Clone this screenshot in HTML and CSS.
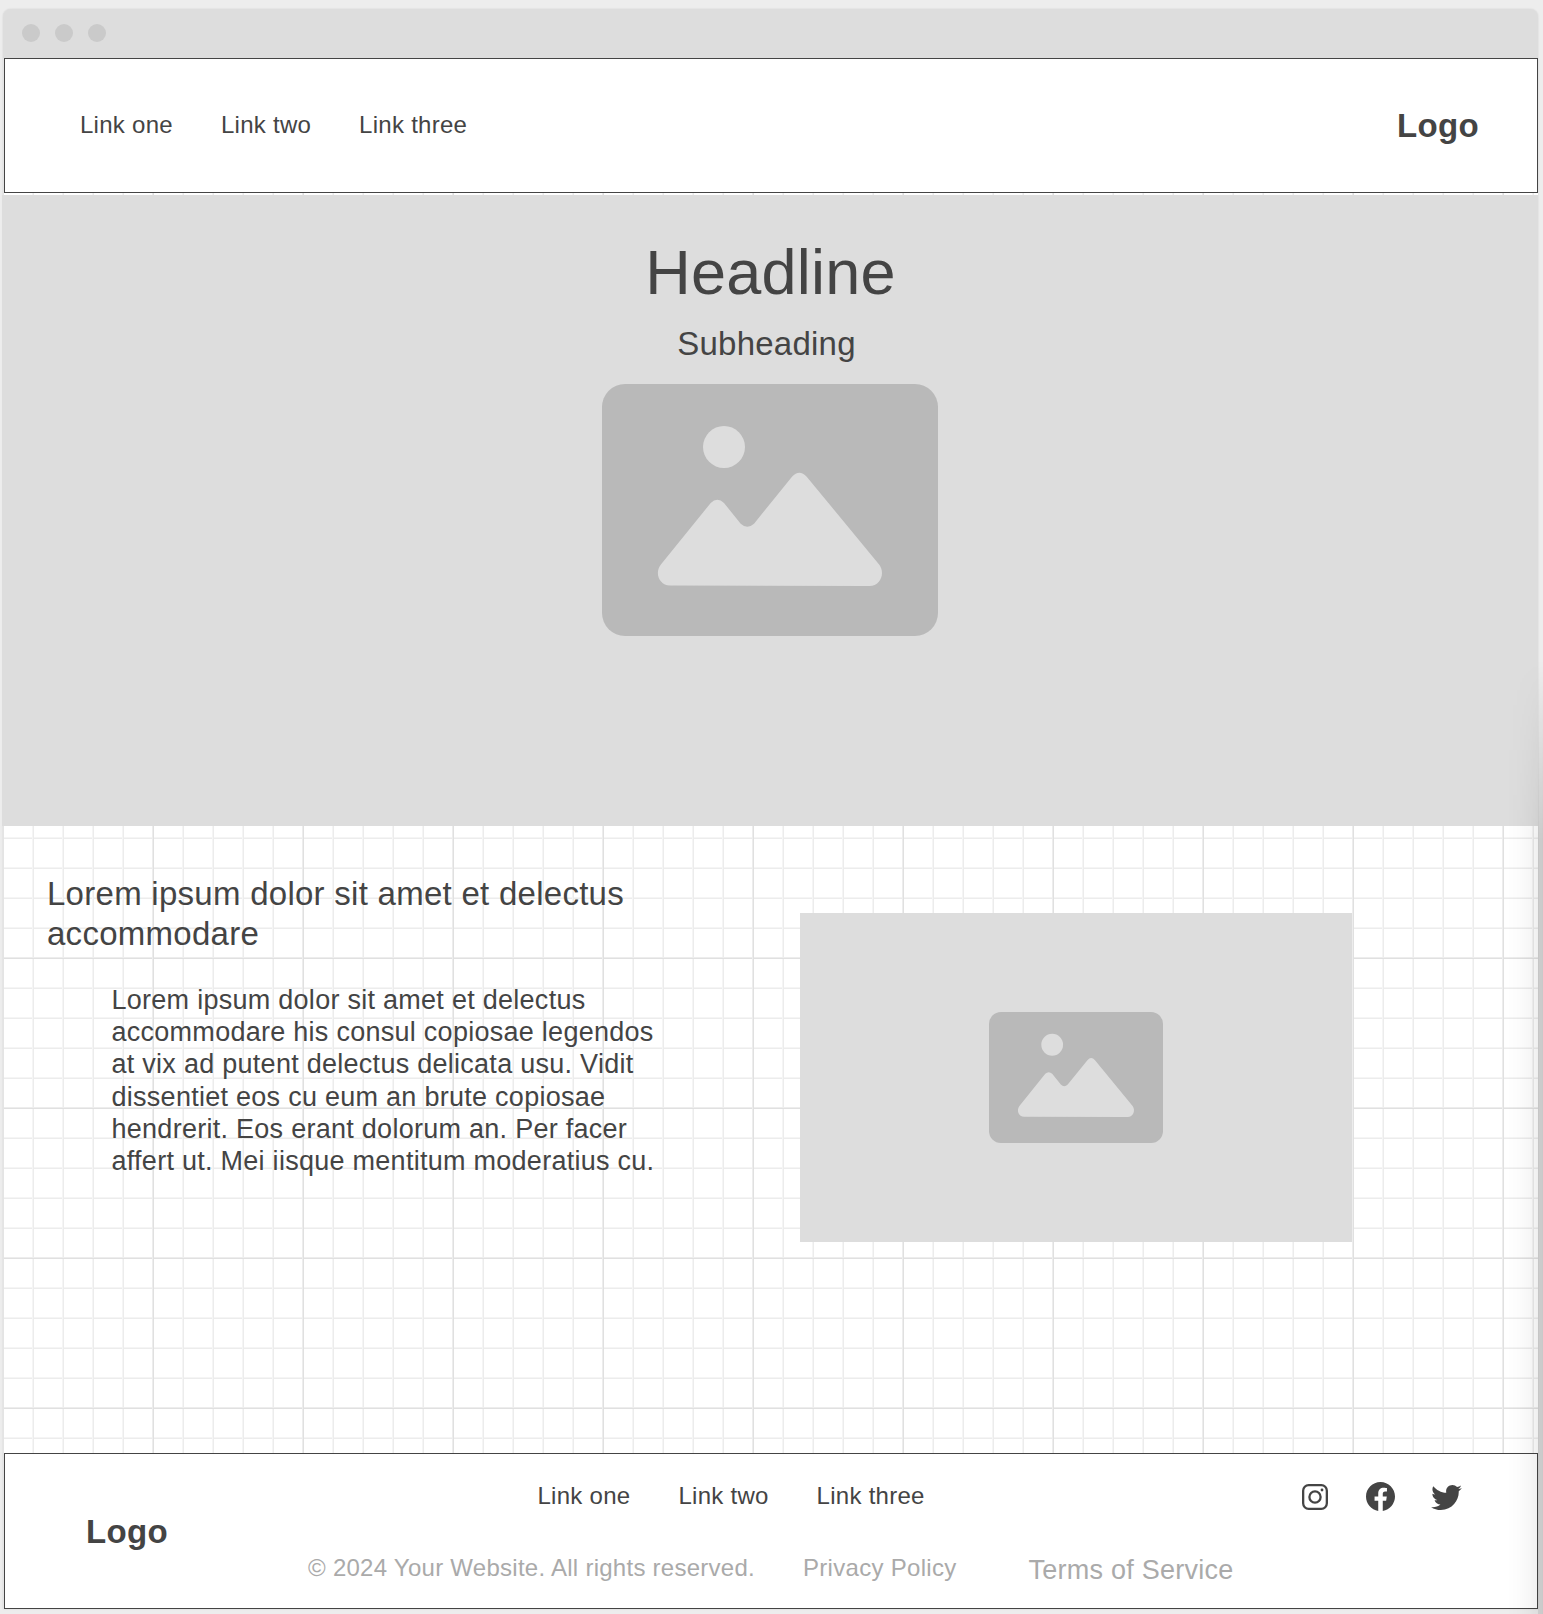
FILE: index.html
```html
<!DOCTYPE html>
<html lang="en">
<head>
<meta charset="utf-8">
<title>Wireframe</title>
<link rel="stylesheet" href="styles.css">
</head>
<body>
<svg class="defs" width="0" height="0" aria-hidden="true">
  <symbol id="picture" viewBox="0 0 336 252" preserveAspectRatio="none">
    <rect width="336" height="252" rx="23" fill="#b9b9b9"/>
    <circle cx="122" cy="63" r="21" fill="#ddd"/>
    <path fill="#ddd" d="M58.7 180.7L108.7 119Q115.3 112.400 122 119L138.700 139.700Q145.300 145.700 152 139.700L190 92.700Q197.300 84.700 204.700 92.700L277.300 180.700C283.500 189 278.500 202 267.500 202L68 201.500C57 201.500 52.500 189 58.700 180.700Z"/>
  </symbol>
</svg>
<div class="window">
  <div class="titlebar"><span class="dot"></span><span class="dot"></span><span class="dot"></span></div>
  <div class="page">
    <header class="header">
      <nav class="links"><a>Link one</a><a>Link two</a><a>Link three</a></nav>
      <div class="logo">Logo</div>
    </header>
    <section class="hero">
      <h1 class="headline">Headline</h1>
      <p class="subheading">Subheading</p>
      <svg class="hero-picture"><use href="#picture"/></svg>
    </section>
    <section class="content">
      <div class="copy">
        <h2 class="title">Lorem ipsum dolor sit amet et delectus<br>accommodare</h2>
        <p class="body">Lorem ipsum dolor sit amet et delectus<br>accommodare his consul copiosae legendos<br>at vix ad putent delectus delicata usu. Vidit<br>dissentiet eos cu eum an brute copiosae<br>hendrerit. Eos erant dolorum an. Per facer<br>affert ut. Mei iisque mentitum moderatius cu.</p>
      </div>
      <div class="figure"><svg class="figure-picture"><use href="#picture"/></svg></div>
    </section>
    <footer class="footer">
      <div class="logo footer-logo">Logo</div>
      <div class="footer-main">
        <div class="footer-top">
          <nav class="links"><a>Link one</a><a>Link two</a><a>Link three</a></nav>
          <div class="social">
            <svg class="icon-instagram" viewBox="0 0 26 26" fill="none" stroke="#444" stroke-width="2.300"><rect x="1.150" y="1.150" width="23.700" height="23.700" rx="5.500"/><circle cx="13" cy="13" r="5.600"/><circle cx="20" cy="6" r="1.400" fill="#444" stroke="none"/></svg>
            <svg class="icon-facebook" viewBox="2 2.040 20 20" fill="#444"><path d="M12 2.040C6.500 2.040 2 6.530 2 12.060C2 17.060 5.660 21.210 10.440 21.960V14.960H7.900V12.060H10.440V9.850C10.440 7.340 11.930 5.960 14.220 5.960C15.310 5.960 16.450 6.150 16.450 6.150V8.620H15.190C13.950 8.620 13.560 9.390 13.560 10.180V12.060H16.340L15.890 14.960H13.560V21.960A10 10 0 0 0 22 12.060C22 6.530 17.500 2.040 12 2.040Z"/></svg>
            <svg class="icon-twitter" viewBox="1.540 4 20.920 17" fill="#444"><path d="M22.460 6C21.690 6.350 20.860 6.580 20 6.690C20.880 6.160 21.560 5.320 21.880 4.310C21.050 4.810 20.130 5.160 19.160 5.360C18.370 4.500 17.260 4 16 4C13.650 4 11.730 5.920 11.730 8.290C11.730 8.630 11.770 8.960 11.840 9.270C8.280 9.090 5.110 7.380 3 4.790C2.630 5.420 2.420 6.160 2.420 6.940C2.420 8.430 3.170 9.750 4.330 10.500C3.620 10.500 2.960 10.300 2.380 10V10.030C2.380 12.110 3.860 13.850 5.820 14.240C5.460 14.340 5.080 14.390 4.690 14.390C4.420 14.390 4.150 14.360 3.890 14.310C4.430 16 6 17.260 7.890 17.290C6.430 18.450 4.580 19.130 2.560 19.130C2.220 19.130 1.880 19.110 1.540 19.070C3.440 20.290 5.700 21 8.120 21C16 21 20.330 14.460 20.330 8.790C20.330 8.600 20.330 8.420 20.320 8.230C21.160 7.630 21.880 6.870 22.460 6Z"/></svg>
          </div>
        </div>
        <div class="legal"><span class="copyright">© 2024 Your Website. All rights reserved.</span><span class="privacy">Privacy Policy</span><span class="terms">Terms of Service</span></div>
      </div>
    </footer>
  </div>
</div>
<div class="edge-shadow"></div>
</body>
</html>
```
FILE: styles.css
```css
* { box-sizing: border-box; }
body {
  margin: 0;
  width: 1543px;
  height: 1614px;
  padding: 9px 5px 0 3px;
  position: relative;
  overflow: hidden;
  background: #ededed;
  color: #444;
  font-family: "Liberation Sans", Arial, sans-serif;
}
h1, h2, p { margin: 0; font-weight: 400; white-space: nowrap; }
.defs { display: block; }
.window {
  width: 1535px;
  height: 1600px;
  border-radius: 8px 8px 0 0;
  background: #e4e4e4;
  box-shadow: 0 0 2px rgba(0, 0, 0, .12);
}
.titlebar {
  height: 49px;
  padding: 0 19px 1px;
  display: flex;
  align-items: center;
  gap: 15px;
  border-radius: 8px 8px 0 0;
  background: #ddd;
}
.dot { width: 18px; height: 18px; border-radius: 50%; background: #cacaca; }
.page {
  margin-left: 1px;
  width: 1534px;
  height: 1551px;
  background-color: #fff;
  background-image:
    linear-gradient(90deg, #ededed 1px, #e0e0e0 1px, #e0e0e0 2px, transparent 2px),
    linear-gradient(#ededed 1px, #e0e0e0 1px, #e0e0e0 2px, transparent 2px),
    linear-gradient(90deg, #f5f5f5 1px, #ececec 1px, #ececec 2px, transparent 2px),
    linear-gradient(#f5f5f5 1px, #ececec 1px, #ececec 2px, transparent 2px);
  background-size: 150px 150px, 150px 150px, 30px 30px, 30px 30px;
  background-position: 148px 0, 0 149px, 28px 0, 0 29px;
}
.header {
  height: 135px;
  padding: 0 58px 0 75px;
  display: flex;
  align-items: center;
  justify-content: space-between;
  border: 1px solid #444;
  background: #fff;
}
.links { display: flex; gap: 48px; font-size: 24px; line-height: 28px; letter-spacing: .27px; }
.header .links { padding-bottom: 2px; }
.logo { font-size: 33px; line-height: 38px; font-weight: 700; letter-spacing: .01em; }
.hero {
  margin: 2px 0 0 -2px;
  width: 1536px;
  height: 631px;
  padding-top: 41px;
  display: flex;
  flex-direction: column;
  align-items: center;
  background: #ddd;
}
.headline { margin-left: 1px; font-size: 63px; line-height: 72px; letter-spacing: .25px; }
.subheading { margin: 17px 7px 0 0; font-size: 33px; line-height: 38px; letter-spacing: .24px; }
.hero-picture { margin-top: 21px; width: 336px; height: 252px; }
.content {
  height: 627px;
  padding: 48px 0 0 43px;
  display: flex;
  align-items: flex-start;
}
.copy { width: 753px; }
.title { font-size: 33px; line-height: 40px; letter-spacing: .27px; }
.body { margin: 30px 0 0 64.500px; font-size: 27px; line-height: 32.220px; letter-spacing: .01em; }
.figure {
  margin-top: 39px;
  width: 552px;
  height: 329px;
  display: flex;
  align-items: center;
  justify-content: center;
  background: #ddd;
}
.figure-picture { width: 174px; height: 131px; }
.footer {
  height: 156px;
  padding-left: 81px;
  display: flex;
  align-items: center;
  border: 1px solid #444;
  background: #fff;
}
.footer-logo { width: 222px; padding-top: 2px; }
.footer-main { flex: 1; height: 100%; padding-top: 28px; }
.footer-top { margin-left: 229.500px; display: flex; align-items: center; }
.footer .links { width: 388px; padding-bottom: 2px; }
.social { margin-left: 376.500px; display: flex; align-items: center; }
.icon-instagram { width: 26px; height: 26px; }
.icon-facebook { margin: 0 0 1px 38px; width: 29px; height: 29px; }
.icon-twitter { margin-left: 35.500px; width: 31px; height: 25px; }
.legal { margin-top: 42px; display: flex; align-items: flex-start; color: #aaa; font-size: 24px; line-height: 28px; letter-spacing: .265px; white-space: nowrap; }
.privacy { margin-left: 48px; letter-spacing: .3px; }
.terms { margin: 2px 0 0 72px; font-size: 27px; letter-spacing: .24px; }
.edge-shadow {
  position: absolute;
  right: 0;
  top: 660px;
  width: 36px;
  height: 954px;
  background: linear-gradient(to left, rgba(0, 0, 0, .15) 0, rgba(0, 0, 0, .13) 5px, rgba(0, 0, 0, .06) 5px, rgba(0, 0, 0, .03) 14px, rgba(0, 0, 0, .01) 24px, transparent);
  -webkit-mask-image: linear-gradient(transparent, #000 180px);
  mask-image: linear-gradient(transparent, #000 180px);
}
```
